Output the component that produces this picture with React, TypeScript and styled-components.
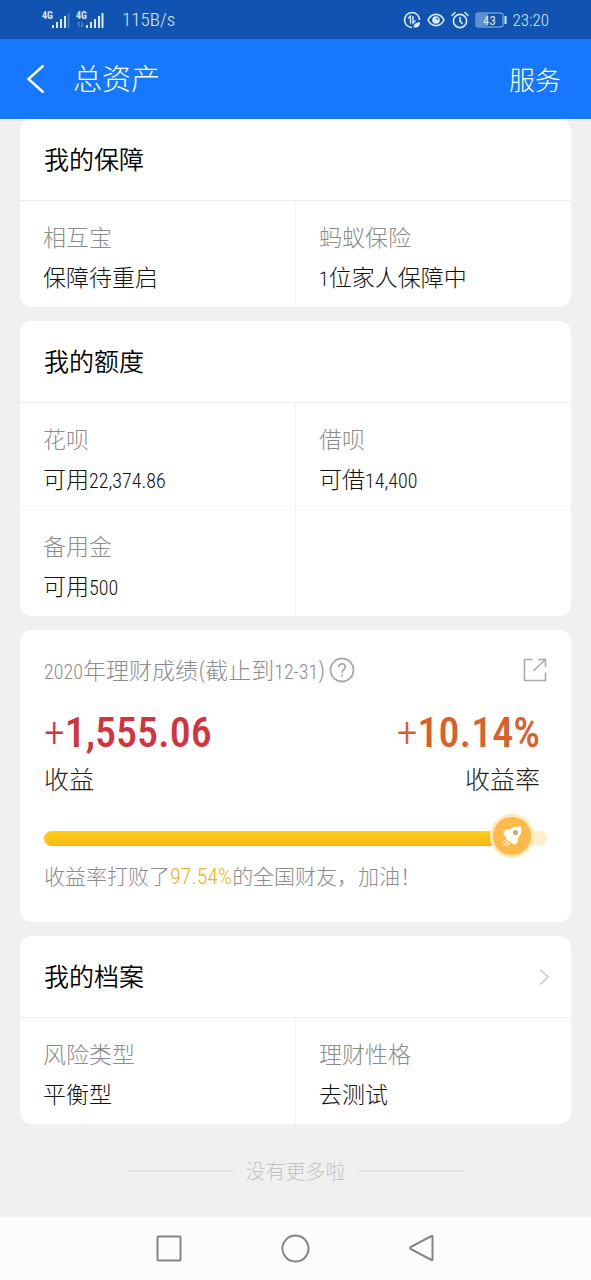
import React from 'react';
import styled, { createGlobalStyle } from 'styled-components';

const cjk = '"Noto Sans CJK SC", "Noto Sans", sans-serif';
const narrow = '"Roboto Condensed", "Liberation Sans Narrow", Roboto, sans-serif';

const GlobalStyle = createGlobalStyle`
  *, *::before, *::after { box-sizing: border-box; }
  body { margin: 0; background: #f0f0f0; font-family: ${cjk}; font-weight: 300; color: #333; }
  button { margin: 0; padding: 0; border: 0; background: none; color: inherit; font: inherit; cursor: pointer; }
  a { color: inherit; text-decoration: none; }
  h1, h2, h3, p, dl, dt, dd { margin: 0; font-weight: inherit; }
  svg { display: block; flex: none; }
`;

const Page = styled.div`
  display: flex;
  flex-direction: column;
  min-height: 100vh;
`;

const StatusBar = styled.div`
  display: flex;
  align-items: center;
  justify-content: space-between;
  height: 39px;
  padding: 0 42px;
  background: #1053b1;
  color: #d9ebff;
`;

const StatusGroup = styled.div<{ $gap: number }>`
  display: flex;
  align-items: center;
  gap: ${p => p.$gap}px;
`;

const StatusText = styled.span<{ $size: number }>`
  font-family: ${narrow};
  font-size: ${p => p.$size}px;
  line-height: 24px;
`;

const Rate = styled(StatusText)`
  padding-left: 12px;
`;

const Header = styled.header`
  display: flex;
  align-items: center;
  height: 80px;
  padding: 0 30px 0 26px;
  background: #1677ff;
  color: #fff;
`;

const PageTitle = styled.h1`
  flex: 1;
  padding: 0 0 4px 27px;
  font-size: 29px;
  line-height: 40px;
`;

const ServiceLink = styled.a`
  font-size: 26px;
  line-height: 40px;
`;

const Content = styled.main`
  display: flex;
  flex: 1;
  flex-direction: column;
  gap: 14px;
  padding: 0 20px;
`;

const Card = styled.section`
  overflow: hidden;
  border-radius: 12px;
  background: #fff;
`;

const CardHead = styled.div`
  display: flex;
  align-items: center;
  justify-content: space-between;
  height: 82px;
  padding: 0 22px 0 24px;
  border-bottom: 1px solid #eee;
`;

const CardTitle = styled.h2`
  padding-bottom: 4px;
  color: #000;
  font-size: 25px;
  font-weight: 350;
  line-height: 36px;
`;

const CellGrid = styled.dl`
  display: grid;
  grid-template-columns: 1fr 1fr;
  gap: 1px;
  background: #f3f3f3;
`;

const Cell = styled.div`
  height: 106px;
  padding: 15px 23px;
  background: #fff;
`;

const CellLabel = styled.dt`
  color: #8c8c8c;
  font-size: 23px;
  line-height: 40px;
`;

const CellValue = styled.dd`
  color: #111;
  font-size: 23px;
  line-height: 40px;
`;

const Digits = styled.span`
  font-family: ${narrow};
  font-size: 20px;
`;

const ResultCard = styled(Card)`
  height: 292px;
  padding: 20px 24px 0;
`;

const ResultHead = styled.div`
  display: flex;
  align-items: center;
  gap: 4px;
  height: 40px;
  color: #8c8c8c;
`;

const ResultTitle = styled.h2`
  font-size: 23px;
  line-height: 40px;
`;

const ShareButton = styled.button`
  margin-left: auto;
`;

const Figures = styled.div`
  display: flex;
  justify-content: space-between;
  padding: 18px 7px 0 0;
`;

const Figure = styled.div<{ $end?: boolean }>`
  text-align: ${p => (p.$end ? 'right' : 'left')};
`;

const FigureValue = styled.p<{ $color: string }>`
  color: ${p => p.$color};
  font-family: ${narrow};
  font-size: 42px;
  font-weight: 500;
  line-height: 50px;
`;

const Sign = styled.span`
  font-weight: 300;
`;

const FigureLabel = styled.p`
  color: #222;
  font-size: 25px;
  line-height: 40px;
`;

const Track = styled.div`
  position: relative;
  height: 15px;
  margin-top: 33px;
  border-radius: 8px;
  background: linear-gradient(#ffedcc, #ffedcc) right / 50% 100% no-repeat;
`;

const Fill = styled.div`
  height: 100%;
  border-radius: 8px;
  background: linear-gradient(#fdd01c, #fcb515);
`;

const Knob = styled.span`
  position: absolute;
  top: -17px;
  display: grid;
  place-items: center;
  width: 44px;
  height: 44px;
  border: 3px solid #ffe9ba;
  border-radius: 50%;
  background: #fdba4b;
  transform: translateX(-50%);
`;

const Comment = styled.p`
  margin-top: 9px;
  color: #8c8c8c;
  font-size: 21px;
  line-height: 40px;
`;

const Highlight = styled.em`
  color: #e6b422;
  font-family: ${narrow};
  font-size: 22px;
  font-style: normal;
`;

const EndNote = styled.p`
  display: flex;
  align-items: center;
  justify-content: center;
  gap: 12px;
  height: 66px;
  color: #c4c4c4;
  font-size: 20px;
  line-height: 30px;

  &::before,
  &::after {
    content: '';
    width: 107px;
    height: 2px;
    background: #e2e2e2;
  }
`;

const NavBar = styled.nav`
  display: flex;
  justify-content: center;
  height: 63px;
  background: #fcfcfc;
`;

const NavButton = styled.button`
  display: grid;
  place-items: center;
  width: 126px;
`;

const Signal = ({ weak }: { weak?: boolean }) => (
  <svg width="29" height="20" viewBox="0 0 29 20" fill="currentColor" aria-hidden="true">
    <text x="0" y="9" fontFamily="Roboto Condensed, Roboto, sans-serif" fontSize="10" fontWeight="700">4G</text>
    {!weak && <path d="M3 12v5M1.500 13.500L3 12M6 12v5M7.500 15.500L6 17" stroke="currentColor" strokeWidth="1" opacity=".45" fill="none" />}
    <path d="M10 15h2v3h-2zM14 12h2v6h-2zM18 9h2v9h-2zM22 6h2v12h-2z" />
    <path d="M25.500 3h2v15h-2z" opacity={weak ? 0.25 : 1} />
  </svg>
);

const SaverIcon = () => (
  <svg width="18" height="18" viewBox="0 0 18 18" fill="none" stroke="currentColor" strokeWidth="1.600" aria-hidden="true">
    <path d="M9 16.500A7.500 7.500 0 1 1 16.500 9" />
    <path d="M5 7.500L7.500 5V12.500M10 5V12L12.500 9.500" strokeWidth="1.400" />
    <path d="M10.500 16.500c0-3 2-5 6.500-5.500 0 4-1.500 6-6.500 5.500z" fill="currentColor" stroke="none" />
  </svg>
);

const EyeIcon = () => (
  <svg width="18" height="18" viewBox="0 0 18 18" fill="none" stroke="currentColor" strokeWidth="1.600" aria-hidden="true">
    <path d="M1 9C4.500 1.500 13.500 1.500 17 9C13.500 16.500 4.500 16.500 1 9Z" />
    <circle cx="9" cy="9" r="3.800" fill="currentColor" stroke="none" />
    <circle cx="10.300" cy="7.800" r="1" fill="#1053b1" stroke="none" />
  </svg>
);

const AlarmIcon = () => (
  <svg width="18" height="18" viewBox="0 0 18 18" fill="none" stroke="currentColor" strokeWidth="1.600" strokeLinecap="round" aria-hidden="true">
    <circle cx="9" cy="10" r="6.600" />
    <path d="M9 6.500V10l2 2.500M1 4.500L4 1.500M17 4.500L14 1.500" />
  </svg>
);

const BatteryIcon = () => (
  <svg width="32" height="16" viewBox="0 0 32 16" aria-label="43%">
    <rect x="1" y="1" width="27" height="14" rx="2" fill="none" stroke="currentColor" opacity=".7" />
    <rect x="2" y="2" width="11" height="12" rx="1" fill="#5f8fd2" />
    <rect x="29.500" y="4" width="2" height="8" fill="currentColor" />
    <text x="14.500" y="12.500" textAnchor="middle" fill="currentColor" fontFamily="Roboto Condensed, Roboto, sans-serif" fontSize="13" fontWeight="400">43</text>
  </svg>
);

const BackIcon = () => (
  <svg width="20" height="30" viewBox="0 0 20 30" fill="none" stroke="currentColor" strokeWidth="2.400" aria-hidden="true">
    <path d="M17.500 1.500L2.500 15L17.500 28.500" />
  </svg>
);

const HelpIcon = () => (
  <svg width="26" height="26" viewBox="0 0 26 26" fill="none" stroke="#aaa" strokeWidth="1.800" aria-hidden="true">
    <circle cx="13" cy="13" r="11.500" />
    <path d="M9.700 10.300C9.700 5.700 16.300 5.700 16.300 10C16.300 12.700 13 12.700 13 15.800" />
    <path d="M13 17.600v2" />
  </svg>
);

const ShareIcon = () => (
  <svg width="24" height="24" viewBox="0 0 24 24" fill="none" stroke="#aaa" strokeWidth="1.600" aria-hidden="true">
    <path d="M9.500 1.500H1.500V22.500H22.500V14.500" />
    <path d="M10.500 13L22 1.800M15 1.500H22.500V9" />
  </svg>
);

const ArrowIcon = () => (
  <svg width="10" height="18" viewBox="0 0 10 18" fill="none" stroke="#ccc" strokeWidth="1.600" aria-hidden="true">
    <path d="M1 1.500L9 9L1 16.500" />
  </svg>
);

const RocketIcon = () => (
  <svg width="22" height="24" viewBox="0 0 22 24" aria-hidden="true">
    <path d="M20 2.500C15 2 11 3 9 5.500C5.500 4.500 2.500 6.500 2.500 9.500C2.500 11.500 4.500 12 5 13C5.500 15.500 6 17 8.500 17.500C10.500 17.800 11 20.500 13 20.500C16 20 17.500 17 17 14C20 11 21 7 20 2.500Z" fill="#fff" />
    <circle cx="14.500" cy="8.500" r="2.600" fill="#cfa878" />
    <path d="M2 22L7 17.500M1.500 18.500L4.500 16M5.500 22L8.500 19" stroke="#fff" strokeWidth="1.200" opacity=".75" />
  </svg>
);

const navItems = [
  { label: '最近任务', d: 'M4.500 2.500H25.500Q26.500 2.500 26.500 3.500V25.500Q26.500 26.500 25.500 26.500H4.500Q3.500 26.500 3.500 25.500V3.500Q3.500 2.500 4.500 2.500Z' },
  { label: '主屏幕', d: 'M15.500 1.500A13 13 0 1 1 15.490 1.500Z' },
  { label: '返回', d: 'M25.500 2Q26.500 1.500 26.500 2.500V25.500Q26.500 26.500 25.500 26L4.500 14.800Q3.500 14 4.500 13.200Z' },
];

const numeric = (text: string) =>
  text.split(/([\d.,\-]+)/).map((part, i) => (i % 2 ? <Digits key={i}>{part}</Digits> : part));

type Item = { label: string; value: string };

const Cells = ({ items }: { items: Item[] }) => (
  <CellGrid>
    {items.map(item => (
      <Cell key={item.label}>
        <CellLabel>{item.label}</CellLabel>
        <CellValue>{numeric(item.value)}</CellValue>
      </Cell>
    ))}
    {items.length % 2 === 1 && <Cell aria-hidden="true" />}
  </CellGrid>
);

const protection = [
  { label: '相互宝', value: '保障待重启' },
  { label: '蚂蚁保险', value: '1位家人保障中' },
];
const credit = [
  { label: '花呗', value: '可用22,374.86' },
  { label: '借呗', value: '可借14,400' },
  { label: '备用金', value: '可用500' },
];
const profile = [
  { label: '风险类型', value: '平衡型' },
  { label: '理财性格', value: '去测试' },
];
const progress = 93;

export default function App() {
  return (
    <Page>
      <GlobalStyle />
      <StatusBar>
        <StatusGroup $gap={5}>
          <Signal weak />
          <Signal />
          <Rate $size={19}>115B/s</Rate>
        </StatusGroup>
        <StatusGroup $gap={6}>
          <SaverIcon />
          <EyeIcon />
          <AlarmIcon />
          <BatteryIcon />
          <StatusText $size={17}>23:20</StatusText>
        </StatusGroup>
      </StatusBar>
      <Header>
        <button type="button" aria-label="返回"><BackIcon /></button>
        <PageTitle>总资产</PageTitle>
        <ServiceLink href="#service">服务</ServiceLink>
      </Header>
      <Content>
        <Card>
          <CardHead><CardTitle>我的保障</CardTitle></CardHead>
          <Cells items={protection} />
        </Card>
        <Card>
          <CardHead><CardTitle>我的额度</CardTitle></CardHead>
          <Cells items={credit} />
        </Card>
        <ResultCard>
          <ResultHead>
            <ResultTitle>{numeric('2020年理财成绩(截止到12-31)')}</ResultTitle>
            <button type="button" aria-label="说明"><HelpIcon /></button>
            <ShareButton type="button" aria-label="分享"><ShareIcon /></ShareButton>
          </ResultHead>
          <Figures>
            <Figure>
              <FigureValue $color="#d0343f"><Sign>+</Sign>1,555.06</FigureValue>
              <FigureLabel>收益</FigureLabel>
            </Figure>
            <Figure $end>
              <FigureValue $color="#d9602b"><Sign>+</Sign>10.14%</FigureValue>
              <FigureLabel>收益率</FigureLabel>
            </Figure>
          </Figures>
          <Track role="progressbar" aria-valuenow={progress} aria-label="收益率排名">
            <Fill style={{ width: `${progress}%` }} />
            <Knob style={{ left: `${progress}%` }}><RocketIcon /></Knob>
          </Track>
          <Comment>收益率打败了<Highlight>97.54%</Highlight>的全国财友，加油！</Comment>
        </ResultCard>
        <Card>
          <CardHead as="a" href="#profile">
            <CardTitle>我的档案</CardTitle>
            <ArrowIcon />
          </CardHead>
          <Cells items={profile} />
        </Card>
        <EndNote>没有更多啦</EndNote>
      </Content>
      <NavBar>
        {navItems.map(item => (
          <NavButton key={item.label} type="button" aria-label={item.label}>
            <svg width="31" height="30" viewBox="0 0 31 30" fill="none" stroke="#858585" strokeWidth="2" aria-hidden="true">
              <path d={item.d} />
            </svg>
          </NavButton>
        ))}
      </NavBar>
    </Page>
  );
}
